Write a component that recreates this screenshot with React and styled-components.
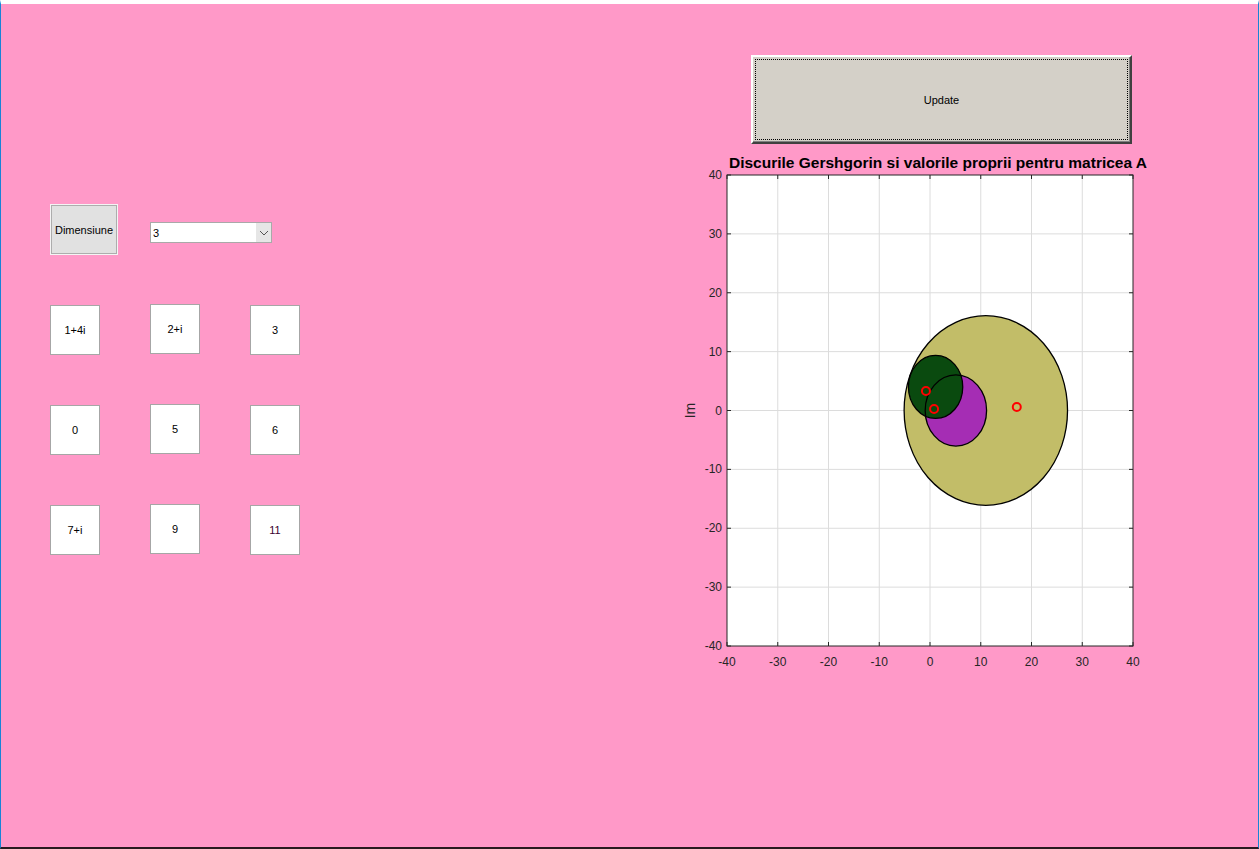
import React from 'react';
import styled, { createGlobalStyle } from 'styled-components';

const GlobalStyle = createGlobalStyle`
    html, body {
        margin: 0;
        padding: 0;
        background: #fff;
    }
    * {
        box-sizing: border-box;
    }
`

const Frame = styled.div`
    width: 1259px;
    height: 849px;
    background: #ff99c8;
    border-top: 4px solid #fff;
    border-left: 1px solid #1883d7;
    border-right: 1px solid #1883d7;
    border-bottom: 2px solid #2a1a1f;
    display: flex;
    font-family: "Liberation Sans", Arial, sans-serif;
    overflow: hidden;
`

const LeftPane = styled.div`
    width: 671px;
    padding: 200px 0 0 49px;
    display: flex;
    flex-direction: column;
`

const DimRow = styled.div`
    display: flex;
    align-items: flex-start;
`

const DimButton = styled.button`
    width: 68px;
    height: 51px;
    background: #e1e1e1;
    border: 1px solid #f4f4f4;
    box-shadow: inset 0 0 0 1px #adadad;
    font-family: inherit;
    font-size: 11px;
    color: #000;
    padding: 0;
`

const Select = styled.div`
    margin: 18px 0 0 32px;
    width: 122px;
    height: 21px;
    background: #fff;
    border: 1px solid #a9a9a9;
    display: flex;
    align-items: center;
    font-size: 11px;
    color: #000;
`

const SelectValue = styled.span`
    flex: 1;
    padding-left: 2px;
`

const SelectArrow = styled.span`
    width: 15px;
    height: 100%;
    background: #e6e6e6;
    display: flex;
    align-items: center;
    justify-content: center;
`

const CellGrid = styled.div`
    margin-top: 50px;
    display: grid;
    grid-template-columns: repeat(3, 50px);
    grid-auto-rows: 50px;
    column-gap: 50px;
    row-gap: 50px;
`

const Cell = styled.button`
    width: 50px;
    height: 50px;
    background: #fff;
    border: 1px solid #a6a6a6;
    font-family: inherit;
    font-size: 11px;
    color: ${p => p.$color || '#000'};
    padding: 0;
    margin-top: ${p => p.$dy || 0}px;
`

const RightPane = styled.div`
    display: flex;
    flex-direction: column;
    padding-top: 51px;
`

const UpdateButton = styled.button`
    margin-left: 79px;
    width: 381px;
    height: 89px;
    background: #d4d0c8;
    border: 2px solid;
    border-color: #fff #404040 #404040 #fff;
    box-shadow: inset -1px -1px 0 #808080;
    outline: 1px dotted #000;
    outline-offset: -5px;
    font-family: inherit;
    font-size: 11px;
    color: #000;
    padding: 0;
`

const Chart = styled.svg`
    margin-top: 7px;
    display: block;
    font-family: "Liberation Sans", Arial, sans-serif;
`

const cells = [
    { label: '1+4i' }, { label: '2+i', dy: -1 }, { label: '3' },
    { label: '0' }, { label: '5', dy: -1 }, { label: '6' },
    { label: '7+i' }, { label: '9', dy: -1 }, { label: '11', color: '#3a0030' },
];

// plot box inside the svg
const L = 55, T = 24, W = 406, H = 471;
const xs = v => L + (v + 40) * W / 80;
const ys = v => T + (40 - v) * H / 80;
const ticks = [-40, -30, -20, -10, 0, 10, 20, 30, 40];

const discs = [
    { cx: 11, cy: 0, r: 16.1, fill: '#c2bd68' },
    { cx: 5.1, cy: 0, r: 6.05, fill: '#a52db4' },
    { cx: 1.1, cy: 4, r: 5.35, fill: '#0a4a0f' },
];

const eigs = [[-0.8, 3.3], [0.8, 0.25], [17.1, 0.6]];

const GershPlot = () => (
    <Chart width="480" height="530" viewBox="0 0 480 530">
        <rect x={L} y={T} width={W} height={H} fill="#fff" />
        {ticks.slice(1, -1).map(t => (
            <g key={t} stroke="#dcdcdc" strokeWidth="1">
                <line x1={xs(t)} y1={T} x2={xs(t)} y2={T + H} />
                <line x1={L} y1={ys(t)} x2={L + W} y2={ys(t)} />
            </g>
        ))}
        {discs.map((d, i) => (
            <ellipse key={i} cx={xs(d.cx)} cy={ys(d.cy)} rx={d.r * W / 80} ry={d.r * H / 80} fill={d.fill} />
        ))}
        {discs.map((d, i) => (
            <ellipse key={'o' + i} cx={xs(d.cx)} cy={ys(d.cy)} rx={d.r * W / 80} ry={d.r * H / 80} fill="none" stroke="#000" strokeWidth="1.3" />
        ))}
        {eigs.map(([x, y], i) => (
            <circle key={i} cx={xs(x)} cy={ys(y)} r="4" fill="none" stroke="#ff0000" strokeWidth="2" />
        ))}
        {ticks.map(t => (
            <g key={'t' + t} stroke="#262626" strokeWidth="1">
                <line x1={xs(t)} y1={T + H} x2={xs(t)} y2={T + H - 4} />
                <line x1={xs(t)} y1={T} x2={xs(t)} y2={T + 4} />
                <line x1={L} y1={ys(t)} x2={L + 4} y2={ys(t)} />
                <line x1={L + W} y1={ys(t)} x2={L + W - 4} y2={ys(t)} />
            </g>
        ))}
        <rect x={L} y={T} width={W} height={H} fill="none" stroke="#262626" strokeWidth="1" />
        {ticks.map(t => (
            <text key={'xl' + t} x={xs(t)} y={T + H + 20} fontSize="12" fill="#262626" textAnchor="middle">{t}</text>
        ))}
        {ticks.map(t => (
            <text key={'yl' + t} x={L - 5} y={ys(t) + 4} fontSize="12" fill="#262626" textAnchor="end">{t}</text>
        ))}
        <text x="0" y="0" fontSize="14" fill="#262626" textAnchor="middle" transform={`translate(23 ${ys(0)}) rotate(-90)`}>Im</text>
        <text x="266" y="17" fontSize="15.5" fontWeight="bold" fill="#000" textAnchor="middle">Discurile Gershgorin si valorile proprii pentru matricea A</text>
    </Chart>
);

const App = () => {
    return (
        <>
            <GlobalStyle />
            <Frame>
                <LeftPane>
                    <DimRow>
                        <DimButton>Dimensiune</DimButton>
                        <Select>
                            <SelectValue>3</SelectValue>
                            <SelectArrow>
                                <svg width="10" height="6" viewBox="0 0 10 6">
                                    <path d="M1 1 L5 5 L9 1" fill="none" stroke="#555" strokeWidth="1" />
                                </svg>
                            </SelectArrow>
                        </Select>
                    </DimRow>
                    <CellGrid>
                        {cells.map((c, i) => (
                            <Cell key={i} $dy={c.dy} $color={c.color}>{c.label}</Cell>
                        ))}
                    </CellGrid>
                </LeftPane>
                <RightPane>
                    <UpdateButton>Update</UpdateButton>
                    <GershPlot />
                </RightPane>
            </Frame>
        </>
    )
}

export default App
